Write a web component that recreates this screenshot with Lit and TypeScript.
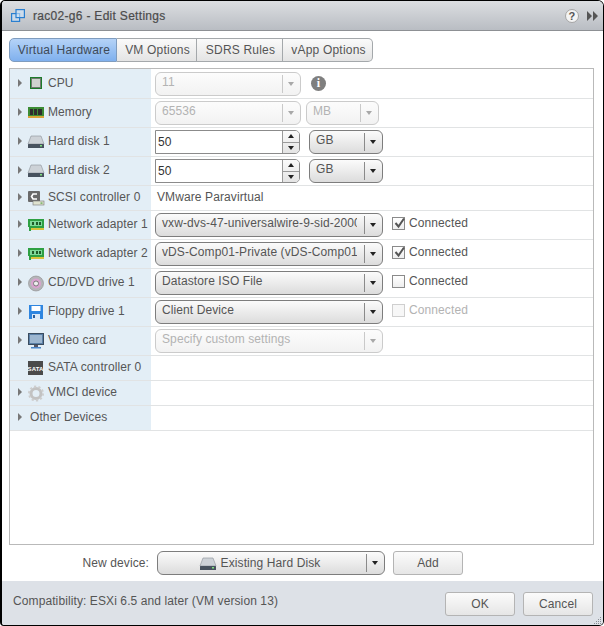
import { LitElement, html, css, svg } from "lit";
import { customElement } from "lit/decorators.js";

const icons: Record<string, any> = {
  cpu: svg`<rect x="2" y="2" width="12" height="12" fill="#1c7a2a"/><rect x="3.500" y="3.500" width="9" height="9" fill="#cfd3cf" stroke="#6f7a6f"/>`,
  mem: svg`<rect x="0" y="3" width="16" height="9" fill="#3c8c35"/><rect x="2" y="5" width="3" height="6" fill="#2e2e2e"/><rect x="6" y="5" width="3" height="6" fill="#2e2e2e"/><rect x="10" y="5" width="4" height="6" fill="#2e2e2e"/><rect x="0" y="12" width="16" height="2" fill="#d8a53a"/>`,
  disk: svg`<path d="M3 3h10l3 8H0z" fill="#cdd2d7" stroke="#8a9097" stroke-width=".6"/><rect x="0" y="11" width="16" height="4" rx=".5" fill="#47525e"/><rect x="12" y="12" width="2" height="1.500" fill="#7fe07f"/>`,
  scsi: svg`<rect x="0" y="2" width="12" height="11" rx="1" fill="#6a6a6a"/><path d="M9 5H5L3.500 7.500 5 10h4" fill="none" stroke="#fff" stroke-width="1.600"/><rect x="5" y="12" width="11" height="4" fill="#dfe2cf" stroke="#777" stroke-width=".6"/><rect x="12.500" y="13.500" width="2" height="1.200" fill="#5da64f"/>`,
  net: svg`<path d="M0 3h16v9H3v3H1v-4H0z" fill="#2ea043"/><rect x="2" y="5" width="12" height="5" fill="#7fd99a"/><rect x="4" y="6" width="2" height="3" fill="#1e5c2a"/><rect x="8" y="6" width="2" height="3" fill="#1e5c2a"/><rect x="11" y="6" width="2" height="3" fill="#1e5c2a"/><rect x="3" y="12" width="13" height="2" fill="#d8c23a"/>`,
  cd: svg`<circle cx="8" cy="9.500" r="7.500" fill="#b5b5b9" stroke="#888" stroke-width=".6"/><circle cx="8" cy="9.500" r="5" fill="#d9a3cf"/><circle cx="8" cy="9.500" r="2.500" fill="#eee" stroke="#666" stroke-width=".8"/>`,
  floppy: svg`<rect x="1" y="2" width="14" height="14" fill="#2f86e0"/><rect x="3.500" y="3" width="9" height="5" fill="#fff"/><rect x="4" y="11" width="8" height="5" fill="#dce9f7"/><rect x="5" y="12" width="2" height="3" fill="#2a5d9c"/>`,
  video: svg`<rect x="0.500" y="1.500" width="15" height="11" fill="#5a7fa6" stroke="#3a4c5f"/><rect x="2" y="3" width="12" height="8" fill="#9cb6d0"/><rect x="6" y="13" width="4" height="2" fill="#556"/><rect x="3" y="15" width="10" height="1.500" fill="#4a86c8"/>`,
  sata: svg`<rect x="0" y="2" width="15" height="14" fill="#4a4a4a"/><text x="7.500" y="11.500" font-family="Liberation Sans" font-size="6" font-weight="700" fill="#fff" text-anchor="middle">SATA</text>`,
  gear: svg`<circle cx="8" cy="9.500" r="5" fill="none" stroke="#c2c2c2" stroke-width="3"/><circle cx="8" cy="9.500" r="7" fill="none" stroke="#cdcdcd" stroke-width="2" stroke-dasharray="2.200 2.200"/>`,
};

const icon = (name: string) =>
  html`<svg class="ic" width="16" height="16" viewBox="0 0 16 16">${icons[name]}</svg>`;

type Row = { label: string; icon?: string; h: number; arrow?: boolean; content?: any };

@customElement("app-root")
export class AppRoot extends LitElement {
  static styles = css`
    :host { display: block; width: 604px; height: 626px; font: 12px "Liberation Sans", Arial, sans-serif; letter-spacing: .1px; color: #565656; background: #fff; overflow: hidden; }
    * { box-sizing: border-box; }
    .win { width: 604px; height: 626px; display: flex; flex-direction: column; border: solid #000; border-width: 1px 1px 1px 2px; border-radius: 5px 6px 5px 4px; overflow: hidden; background: #fff; }
    .head { height: 30px; flex: none; display: flex; align-items: center; padding: 0 5px 0 9px; background: linear-gradient(#dcdee1, #b9bdc3); border-bottom: 1px solid #8d9094; color: #4b4b4b; }
    .logo { margin-right: 8px; }
    .title { flex: 1; letter-spacing: .3px; -webkit-text-stroke: .2px #4b4b4b; }
    .help { width: 14px; height: 14px; border-radius: 50%; border: 1px solid #a5a5a5; background: #f4f4f4; color: #555; font-size: 11px; font-weight: 700; display: flex; align-items: center; justify-content: center; margin-right: 8px; }
    .content { flex: 1; display: flex; flex-direction: column; padding: 7px 7px 0 7px; }
    .tabs { display: flex; height: 24px; flex: none; }
    .tab { border: 1px solid #a4a8ab; border-left-width: 0; background: linear-gradient(#fafafa, #e4e4e4); display: flex; align-items: center; justify-content: center; height: 24px; padding-left: 2px; color: #555; letter-spacing: .2px; }
    .tab.t1 { width: 108px; border-left-width: 1px; border-radius: 5px 0 0 5px; background: linear-gradient(#b5d3f7, #7fb0ee); color: #3e4a57; border-color: #7f9cbe; }
    .tab.t2 { width: 80px; }
    .tab.t3 { width: 86px; }
    .tab.t4 { width: 90px; border-radius: 0 5px 5px 0; }
    .panel { margin-top: 6px; flex: none; height: 477px; width: 585px; border: 1px solid #b9b9b9; display: flex; flex-direction: column; }
    .row { display: flex; flex: none; border-bottom: 1px solid #e1e3e4; }
    .lab { width: 141px; flex: none; background: #e3eef6; display: flex; align-items: center; padding: 0 0 2px 8px; }
    .arrow { width: 0; height: 0; border-left: 4px solid #777; border-top: 4px solid transparent; border-bottom: 4px solid transparent; flex: none; }
    .arrow.no { border-color: transparent; }
    .icw { width: 20px; margin-left: 6px; flex: none; }
    .noic { width: 8px; flex: none; }
    .ic { display: block; overflow: visible; }
    .val { flex: 1; display: flex; align-items: center; padding-left: 4px; min-width: 0; }
    .sel { height: 24px; flex: none; display: flex; border: 1px solid #7d7d7d; border-radius: 6px; background: linear-gradient(#fbfbfb, #dcdcdc); color: #555; }
    .sel .t { flex: 1; padding: 2px 0 0 6px; margin-right: 7px; overflow: hidden; white-space: nowrap; min-width: 0; }
    .sel .b { width: 18px; flex: none; display: flex; align-items: center; justify-content: center; position: relative; }
    .sel .b::before { content: ""; position: absolute; left: 0; top: 2px; bottom: 2px; width: 1px; background: #8a8a8a; }
    .tri { width: 0; height: 0; border-top: 4px solid #222; border-left: 3.500px solid transparent; border-right: 3.500px solid transparent; }
    .sel.dis { border-color: #cbcbcb; background: linear-gradient(#fcfcfc, #f2f2f2); color: #b3b3b3; }
    .sel.dis .b::before { background: #c9c9c9; }
    .sel.dis .tri { border-top-color: #a8a8a8; }
    .spin { height: 24px; width: 145px; flex: none; display: flex; border: 1px solid #8b8b8b; border-radius: 0 5px 5px 0; background: #fff; overflow: hidden; }
    .spin .n { flex: 1; padding: 4px 0 0 2px; color: #333; }
    .spin .s { width: 17px; border-left: 1px solid #9a9a9a; display: flex; flex-direction: column; background: linear-gradient(#fbfbfb, #e4e4e4); }
    .cell { flex: 1; display: flex; align-items: center; justify-content: center; }
    .cell + .cell { border-top: 1px solid #9a9a9a; }
    .up { width: 0; height: 0; border-bottom: 4px solid #222; border-left: 3.500px solid transparent; border-right: 3.500px solid transparent; }
    .dn { width: 0; height: 0; border-top: 4px solid #222; border-left: 3.500px solid transparent; border-right: 3.500px solid transparent; }
    .m5 { margin-left: 5px; }
    .m9 { margin-left: 9px; }
    .chk { display: flex; align-items: center; gap: 4px; margin-left: 9px; padding-bottom: 4px; color: #555; }
    .chk.dis { color: #b3b3b3; }
    .box { width: 13px; height: 13px; border: 1px solid #8a8a8a; background: linear-gradient(#fff, #eee); display: block; position: relative; flex: none; }
    .chk.dis .box { border-color: #cfcfcf; background: #f7f7f7; }
    .mark { position: absolute; left: 0; top: -2px; }
    .info { width: 15px; height: 15px; border-radius: 50%; background: #7f7f7f; color: #fff; font: 700 12px "Liberation Serif", serif; display: flex; align-items: center; justify-content: center; margin-left: 10px; }
    .plain { color: #555; padding: 0 0 2px 2px; }
    .new { height: 36px; flex: none; display: flex; align-items: center; }
    .nl { width: 140px; text-align: right; color: #555; padding-bottom: 1px; }
    .newsel { margin-left: 8px; width: 228px; }
    .sel .nt { flex: 1; display: flex; align-items: center; justify-content: center; gap: 5px; padding: 0 4px 0 0; color: #555; white-space: nowrap; }
    .btn { height: 24px; width: 70px; flex: none; display: flex; align-items: center; justify-content: center; border: 1px solid #b4b4b4; border-radius: 3px; background: linear-gradient(#fbfbfb, #e6e6e6); color: #555; }
    .btn.m { margin-left: 8px; }
    .foot { height: 45px; flex: none; background: #dde1e7; display: flex; align-items: center; padding: 0 10px 0 11px; position: relative; }
    .foot .c { flex: 1; margin-top: -6px; color: #555; }
    .grip { position: absolute; right: 1px; bottom: 1px; }
  `;

  sel(text: string, w: number, dis = false, extra = "") {
    return html`<div class="sel ${dis ? "dis" : ""} ${extra}" style="width:${w}px"><div class="t">${text}</div><div class="b"><div class="tri"></div></div></div>`;
  }
  spin(v: string) {
    return html`<div class="spin"><div class="n">${v}</div><div class="s"><div class="cell"><div class="up"></div></div><div class="cell"><div class="dn"></div></div></div></div>`;
  }
  chk(on: boolean, dis = false) {
    return html`<div class="chk ${dis ? "dis" : ""}"><span class="box">${on ? html`<svg class="mark" width="14" height="14" viewBox="0 0 14 14"><path d="M2.500 7l3 3.500L11 2.500" fill="none" stroke="#555" stroke-width="2"/></svg>` : ""}</span>Connected</div>`;
  }

  render() {
    const rows: Row[] = [
      { label: "CPU", icon: "cpu", h: 30, content: html`${this.sel("11", 146, true)}<div class="info">i</div>` },
      { label: "Memory", icon: "mem", h: 29, content: html`${this.sel("65536", 146, true)}${this.sel("MB", 73, true, "m5")}` },
      { label: "Hard disk 1", icon: "disk", h: 29, content: html`${this.spin("50")}${this.sel("GB", 74, false, "m9")}` },
      { label: "Hard disk 2", icon: "disk", h: 29, content: html`${this.spin("50")}${this.sel("GB", 74, false, "m9")}` },
      { label: "SCSI controller 0", icon: "scsi", h: 25, content: html`<span class="plain">VMware Paravirtual</span>` },
      { label: "Network adapter 1", icon: "net", h: 29, content: html`${this.sel("vxw-dvs-47-universalwire-9-sid-20000", 228)}${this.chk(true)}` },
      { label: "Network adapter 2", icon: "net", h: 29, content: html`${this.sel("vDS-Comp01-Private (vDS-Comp01", 228)}${this.chk(true)}` },
      { label: "CD/DVD drive 1", icon: "cd", h: 29, content: html`${this.sel("Datastore ISO File", 228)}${this.chk(false)}` },
      { label: "Floppy drive 1", icon: "floppy", h: 29, content: html`${this.sel("Client Device", 228)}${this.chk(false, true)}` },
      { label: "Video card", icon: "video", h: 29, content: html`${this.sel("Specify custom settings", 228, true)}` },
      { label: "SATA controller 0", icon: "sata", h: 25, arrow: false },
      { label: "VMCI device", icon: "gear", h: 25 },
      { label: "Other Devices", h: 25 },
    ];
    return html`<div class="win">
      <div class="head">
        <svg class="logo" width="14" height="13" viewBox="0 0 14 13"><g fill="#cfe4fa" fill-opacity=".6" stroke="#2a7fd0" stroke-width="1.200"><rect x="0.600" y="4.600" width="8" height="7.800"/><rect x="5" y="0.600" width="8.400" height="8"/></g></svg>
        <div class="title">rac02-g6 - Edit Settings</div>
        <div class="help">?</div>
        <svg width="11" height="10" viewBox="0 0 11 10"><path d="M0 0l5 5-5 5zM6 0l5 5-5 5z" fill="#555"/></svg>
      </div>
      <div class="content">
        <div class="tabs">
          <div class="tab t1">Virtual Hardware</div>
          <div class="tab t2">VM Options</div>
          <div class="tab t3">SDRS Rules</div>
          <div class="tab t4">vApp Options</div>
        </div>
        <div class="panel">
          ${rows.map((r) => html`<div class="row" style="height:${r.h}px">
            <div class="lab">
              <div class="arrow ${r.arrow === false ? "no" : ""}"></div>
              ${r.icon ? html`<div class="icw">${icon(r.icon)}</div>` : html`<div class="noic"></div>`}
              <span>${r.label}</span>
            </div>
            <div class="val">${r.content ?? ""}</div>
          </div>`)}
        </div>
        <div class="new">
          <div class="nl">New device:</div>
          <div class="sel newsel"><div class="nt">${icon("disk")}Existing Hard Disk</div><div class="b"><div class="tri"></div></div></div>
          <div class="btn m">Add</div>
        </div>
      </div>
      <div class="foot">
        <div class="c">Compatibility: ESXi 6.5 and later (VM version 13)</div>
        <div class="btn">OK</div>
        <div class="btn m">Cancel</div>
        <svg class="grip" width="9" height="9" viewBox="0 0 9 9" fill="#8a8f96"><rect x="7" y="1" width="1" height="1"/><rect x="5" y="3" width="1" height="1"/><rect x="7" y="3" width="1" height="1"/><rect x="3" y="5" width="1" height="1"/><rect x="5" y="5" width="1" height="1"/><rect x="7" y="5" width="1" height="1"/><rect x="1" y="7" width="1" height="1"/><rect x="3" y="7" width="1" height="1"/><rect x="5" y="7" width="1" height="1"/><rect x="7" y="7" width="1" height="1"/></svg>
      </div>
    </div>`;
  }
}
